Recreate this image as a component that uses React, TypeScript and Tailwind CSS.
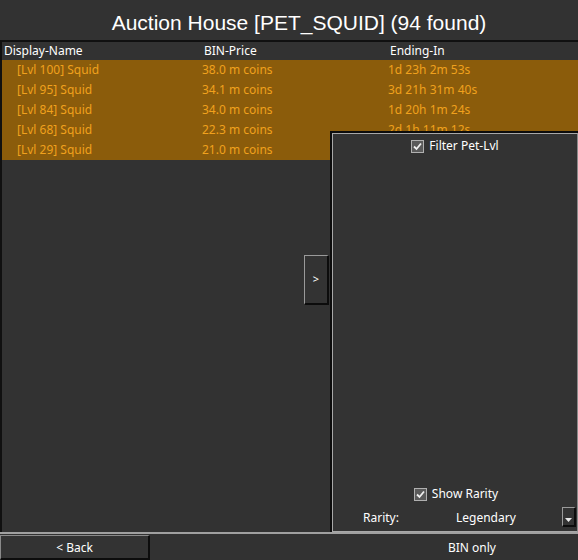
const rows = [
  { name: '[Lvl 100] Squid', price: '38.0 m coins', ends: '1d 23h 2m 53s' },
  { name: '[Lvl 95] Squid', price: '34.1 m coins', ends: '3d 21h 31m 40s' },
  { name: '[Lvl 84] Squid', price: '34.0 m coins', ends: '1d 20h 1m 24s' },
  { name: '[Lvl 68] Squid', price: '22.3 m coins', ends: '2d 1h 11m 12s' },
  { name: '[Lvl 29] Squid', price: '21.0 m coins', ends: '' },
];

const CheckBox = () => (
  <span className="flex h-[13px] w-[13px] items-center justify-center border border-[#b0b0b0] bg-[#5a5a5a]">
    <svg width="9" height="9" viewBox="0 0 9 9">
      <path d="M1 4.5 L3.5 7 L8 1.5" stroke="#f0f0f0" strokeWidth="1.8" fill="none" />
    </svg>
  </span>
);

const App = () => {
  return (
    <div
      className="flex h-[560px] w-[578px] flex-col overflow-hidden bg-[#323232] text-[12px] text-white"
      style={{ fontFamily: '"Noto Sans", "Open Sans", sans-serif' }}
    >
      <header
        className="flex h-[40px] items-center justify-center pl-[20px] pt-[6px] text-[21px] text-white"
        style={{ fontFamily: '"Liberation Sans", Arial, sans-serif' }}
      >
        Auction House [PET_SQUID] (94 found)
      </header>

      <div className="relative h-[492px] border-t-2 border-l-2 border-[#101010]">
        <div className="grid h-[18px] grid-cols-[200px_186px_1fr] items-center pl-[2px] leading-none">
          <span>Display-Name</span>
          <span>BIN-Price</span>
          <span>Ending-In</span>
        </div>
        <div className="bg-[#8b5c0b] text-[#f0a11d]">
          {rows.map((r) => (
            <div key={r.name} className="grid h-[20px] grid-cols-[200px_186px_1fr] items-center leading-none">
              <span className="pl-[15px]">{r.name}</span>
              <span>{r.price}</span>
              <span>{r.ends}</span>
            </div>
          ))}
        </div>

        <button className="absolute left-[302px] top-[213px] flex h-[50px] w-[25px] items-center justify-center border-t border-l border-t-[#9a9a9a] border-l-[#9a9a9a] border-r-2 border-b-2 border-r-[#0c0c0c] border-b-[#0c0c0c] bg-[#333333] text-[11px] text-white">
          &gt;
        </button>

        <aside className="absolute left-[328px] top-[89px] flex h-[401px] w-[248px] flex-col border-t-2 border-l-2 border-[#0c0c0c] bg-[#333333]">
          <div className="flex h-full flex-col border border-[#a8a8a8] border-r-[#8a8a8a]">
            <label className="mt-[3px] flex items-center justify-center gap-[5px]">
              <CheckBox />
              <span>Filter Pet-Lvl</span>
            </label>
            <div className="flex-1" />
            <label className="mb-[2px] flex items-center justify-center gap-[5px] pl-[2px]">
              <CheckBox />
              <span>Show Rarity</span>
            </label>
            <div className="flex h-[26px] items-center">
              <span className="ml-[30px] w-[93px]">Rarity:</span>
              <span className="flex-1">Legendary</span>
              <span className="mb-[2px] mr-[1px] flex h-[20px] w-[14px] items-end justify-center border-t border-l border-[#9a9a9a] border-r-2 border-b-2 border-r-[#0c0c0c] border-b-[#0c0c0c] pb-[3px]">
                <svg width="7" height="4" viewBox="0 0 7 4">
                  <path d="M0 0 H7 L3.5 4 Z" fill="#e8e8e8" />
                </svg>
              </span>
            </div>
          </div>
        </aside>
      </div>

      <footer className="flex flex-1 border-t-2 border-[#a0a0a0] pt-[1px]">
        <button className="flex h-[25px] w-[150px] items-center justify-center border-t border-l border-[#8a8a8a] border-r-2 border-b-2 border-r-[#0c0c0c] border-b-[#0c0c0c] bg-[#333333] pt-[2px] text-white">
          &lt; Back
        </button>
        <div className="flex flex-1 items-center justify-center pl-[216px] pt-[1px]">BIN only</div>
      </footer>
    </div>
  );
};

export default App;
